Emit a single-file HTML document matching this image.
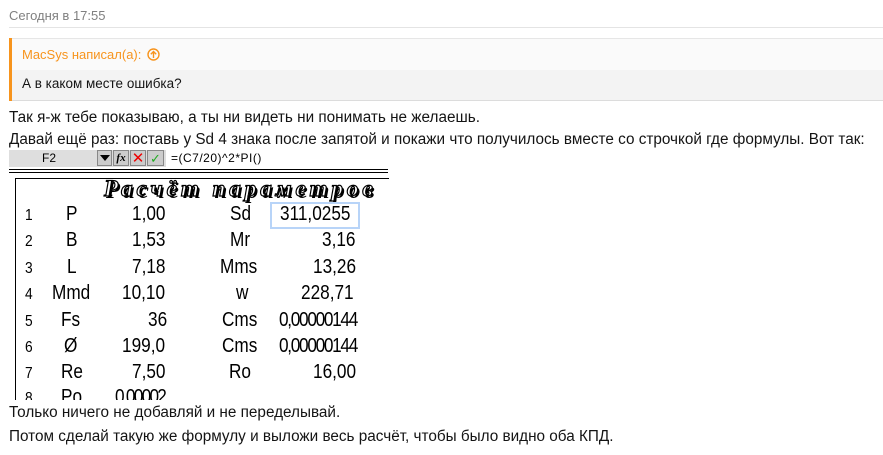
<!DOCTYPE html>
<html><head><meta charset="utf-8"><style>
body{margin:0;width:883px;height:455px;overflow:hidden;background:#fff;font-family:"Liberation Sans",sans-serif;position:relative}
.a{position:absolute;white-space:nowrap}
.t{font-size:15.3px;color:#141414}
.n{font-size:20px;color:#000;transform-origin:left top;transform:scaleX(.86)}
.num{font-size:16px;color:#000;transform:scaleX(.86);transform-origin:left top}
</style></head><body>
<div class="a" style="left:9px;top:8px;font-size:13px;color:#808080">Сегодня в 17:55</div>
<div class="a" style="left:9px;top:27px;width:874px;height:1px;background:#e4e4e4"></div>
<div class="a" style="left:9px;top:38px;width:874px;height:32px;background:#fafafa;border-top:1px solid #e6e6e6"></div>
<div class="a" style="left:9px;top:70px;width:874px;height:30px;background:#f3f3f3;border-bottom:1px solid #dcdcdc"></div>
<div class="a" style="left:9px;top:38px;width:3px;height:63px;background:#f7941d"></div>
<div class="a" style="left:22px;top:47px;font-size:13px;color:#f7941d">MacSys написал(а):</div>
<svg class="a" style="left:147px;top:48px" width="13" height="13" viewBox="0 0 13 13"><circle cx="6.5" cy="6.5" r="5.5" fill="none" stroke="#f7941d" stroke-width="1.4"/><path d="M6.5 10V3.5M3.8 6.2L6.5 3.5 9.2 6.2" fill="none" stroke="#f7941d" stroke-width="1.4"/></svg>
<div class="a" style="left:22px;top:76px;font-size:13.5px;color:#141414">А в каком месте ошибка?</div>
<div class="a t" style="left:9px;top:109px">Так я-ж тебе показываю, а ты ни видеть ни понимать не желаешь.</div>
<div class="a t" style="left:9px;top:131px">Давай ещё раз: поставь у Sd 4 знака после запятой и покажи что получилось вместе со строчкой где формулы. Вот так:</div>
<div class="a" style="left:9px;top:150px;width:157px;height:17px;background:#dedede"></div>
<div class="a" style="left:42px;top:151px;font-size:12px">F2</div>
<div class="a" style="left:97px;top:150px;width:15px;height:16px;background:#ccc;border:1px solid #888;box-sizing:border-box"></div>
<div class="a" style="left:100px;top:155px;width:0;height:0;border-left:5px solid transparent;border-right:5px solid transparent;border-top:6px solid #000"></div>
<div class="a" style="left:113px;top:150px;width:16px;height:16px;background:#ccc;border:1px solid #888;box-sizing:border-box;font:italic bold 11px 'Liberation Serif',serif;text-align:center;line-height:14px">fx</div>
<div class="a" style="left:130px;top:150px;width:16px;height:16px;background:#ccc;border:1px solid #888;box-sizing:border-box;color:#e00;font-size:15px;text-align:center;line-height:15px">✕</div>
<div class="a" style="left:147px;top:150px;width:17px;height:16px;background:#ccc;border:1px solid #888;box-sizing:border-box;color:#2a2;font-size:13px;text-align:center;line-height:15px">✓</div>
<div class="a" style="left:171px;top:151px;font-size:12px;letter-spacing:.5px">=(C7/20)^2*PI()</div>
<div class="a" style="left:9px;top:169px;width:379px;height:2px;border-top:1px solid #000;border-bottom:1px solid #000"></div>
<div class="a" style="left:15px;top:178px;width:374px;height:1px;background:#000"></div>
<div class="a" style="left:15px;top:178px;width:1px;height:222px;background:#000"></div>
<div class="a" style="left:104px;top:176px;font:italic bold 23px 'Liberation Serif',serif;letter-spacing:4px;color:#fff;-webkit-text-stroke:1.2px #000;text-shadow:2px 2px 0 #000">Расчёт параметров</div>
<div class="a" style="left:270px;top:202px;width:90px;height:27px;border:2px solid #b8d4f8;box-sizing:border-box"></div>
<div class="a" style="left:0;top:200px;width:400px;height:200px;overflow:hidden">
<div style="position:relative">
<div class="a num" style="left:25px;top:7px">1</div><div class="a num" style="left:25px;top:33px">2</div><div class="a num" style="left:25px;top:60px">3</div><div class="a num" style="left:25px;top:86px">4</div><div class="a num" style="left:25px;top:113px">5</div><div class="a num" style="left:25px;top:139px">6</div><div class="a num" style="left:25px;top:165px">7</div><div class="a num" style="left:25px;top:190px">8</div>
<div class="a n" style="left:66px;top:3px">P</div><div class="a n" style="left:66px;top:29px">B</div><div class="a n" style="left:67px;top:56px">L</div><div class="a n" style="left:52px;top:82px">Mmd</div><div class="a n" style="left:61px;top:109px">Fs</div><div class="a n" style="left:64px;top:135px">Ø</div><div class="a n" style="left:61px;top:161px">Re</div><div class="a n" style="left:61px;top:186px">Po</div>
<div class="a n" style="left:132px;top:3px">1,00</div><div class="a n" style="left:132px;top:29px">1,53</div><div class="a n" style="left:132px;top:56px">7,18</div><div class="a n" style="left:122px;top:82px">10,10</div><div class="a n" style="left:148px;top:109px">36</div><div class="a n" style="left:122px;top:135px">199,0</div><div class="a n" style="left:132px;top:161px">7,50</div><div class="a n" style="left:115px;top:186px;letter-spacing:-2px">0,00002</div>
<div class="a n" style="left:230px;top:3px">Sd</div><div class="a n" style="left:230px;top:29px">Mr</div><div class="a n" style="left:220px;top:56px">Mms</div><div class="a n" style="left:236px;top:82px">w</div><div class="a n" style="left:222px;top:109px">Cms</div><div class="a n" style="left:222px;top:135px">Cms</div><div class="a n" style="left:229px;top:161px">Ro</div>
<div class="a n" style="left:280px;top:3px">311,0255</div><div class="a n" style="left:322px;top:29px">3,16</div><div class="a n" style="left:313px;top:56px">13,26</div><div class="a n" style="left:301px;top:82px">228,71</div><div class="a n" style="left:279px;top:109px;letter-spacing:-1.5px">0,00000144</div><div class="a n" style="left:279px;top:135px;letter-spacing:-1.5px">0,00000144</div><div class="a n" style="left:313px;top:161px">16,00</div>
</div></div>
<div class="a t" style="left:9px;top:404px">Только ничего не добавляй и не переделывай.</div>
<div class="a t" style="left:9px;top:428px">Потом сделай такую же формулу и выложи весь расчёт, чтобы было видно оба КПД.</div>
</body></html>
